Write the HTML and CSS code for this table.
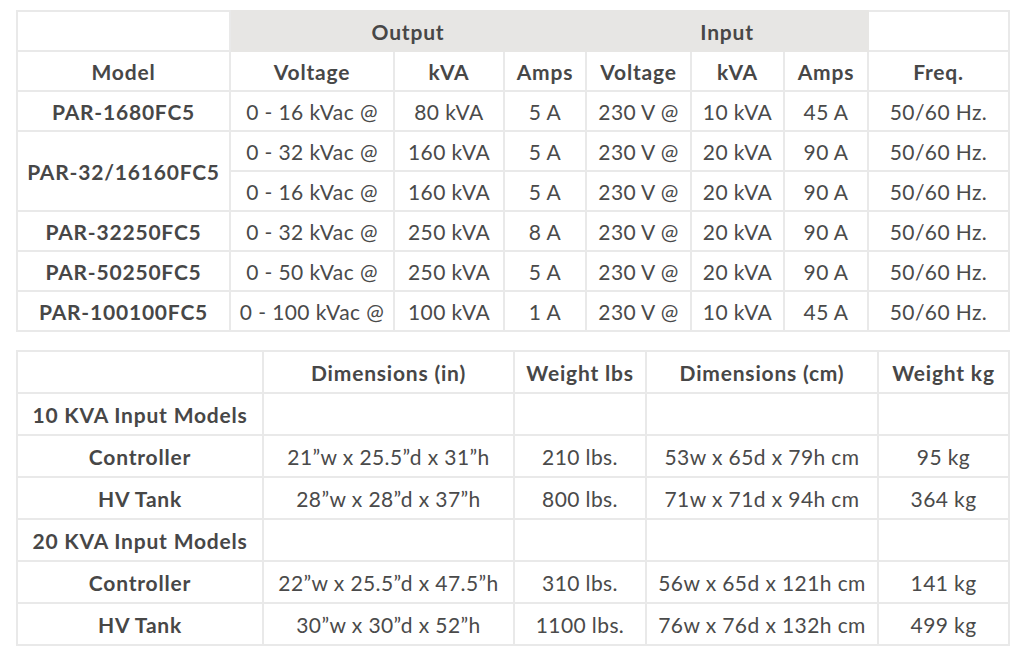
FILE: index.html
```html
<!DOCTYPE html>
<html>
<head>
<meta charset="utf-8">
<link rel="stylesheet" href="styles.css">
</head>
<body>
<div class="page">
<table class="spec spec-power">
  <colgroup>
    <col class="c-model"><col class="c-ovolt"><col class="c-okva"><col class="c-oamps"><col class="c-ivolt"><col class="c-ikva"><col class="c-iamps"><col class="c-freq">
  </colgroup>
  <tr class="group-row">
    <th class="blank"></th>
    <th class="group" colspan="3">Output</th>
    <th class="group" colspan="3">Input</th>
    <th class="blank"></th>
  </tr>
  <tr>
    <th>Model</th><th>Voltage</th><th>kVA</th><th>Amps</th><th>Voltage</th><th>kVA</th><th>Amps</th><th>Freq.</th>
  </tr>
  <tr>
    <th>PAR-1680FC5</th><td>0 - 16 kVac @</td><td>80 kVA</td><td>5 A</td><td>230 V @</td><td>10 kVA</td><td>45 A</td><td>50/60 Hz.</td>
  </tr>
  <tr>
    <th rowspan="2">PAR-32/16160FC5</th><td>0 - 32 kVac @</td><td>160 kVA</td><td>5 A</td><td>230 V @</td><td>20 kVA</td><td>90 A</td><td>50/60 Hz.</td>
  </tr>
  <tr>
    <td>0 - 16 kVac @</td><td>160 kVA</td><td>5 A</td><td>230 V @</td><td>20 kVA</td><td>90 A</td><td>50/60 Hz.</td>
  </tr>
  <tr>
    <th>PAR-32250FC5</th><td>0 - 32 kVac @</td><td>250 kVA</td><td>8 A</td><td>230 V @</td><td>20 kVA</td><td>90 A</td><td>50/60 Hz.</td>
  </tr>
  <tr>
    <th>PAR-50250FC5</th><td>0 - 50 kVac @</td><td>250 kVA</td><td>5 A</td><td>230 V @</td><td>20 kVA</td><td>90 A</td><td>50/60 Hz.</td>
  </tr>
  <tr>
    <th>PAR-100100FC5</th><td>0 - 100 kVac @</td><td>100 kVA</td><td>1 A</td><td>230 V @</td><td>10 kVA</td><td>45 A</td><td>50/60 Hz.</td>
  </tr>
</table>

<table class="spec spec-dims">
  <colgroup>
    <col class="d-name"><col class="d-in"><col class="d-lbs"><col class="d-cm"><col class="d-kg">
  </colgroup>
  <tr>
    <th></th><th>Dimensions (in)</th><th>Weight lbs</th><th>Dimensions (cm)</th><th>Weight kg</th>
  </tr>
  <tr>
    <th>10 KVA Input Models</th><td></td><td></td><td></td><td></td>
  </tr>
  <tr>
    <th>Controller</th><td>21”w x 25.5”d x 31”h</td><td>210 lbs.</td><td>53w x 65d x 79h cm</td><td>95 kg</td>
  </tr>
  <tr>
    <th>HV Tank</th><td>28”w x 28”d x 37”h</td><td>800 lbs.</td><td>71w x 71d x 94h cm</td><td>364 kg</td>
  </tr>
  <tr>
    <th>20 KVA Input Models</th><td></td><td></td><td></td><td></td>
  </tr>
  <tr>
    <th>Controller</th><td>22”w x 25.5”d x 47.5”h</td><td>310 lbs.</td><td>56w x 65d x 121h cm</td><td>141 kg</td>
  </tr>
  <tr>
    <th>HV Tank</th><td>30”w x 30”d x 52”h</td><td>1100 lbs.</td><td>76w x 76d x 132h cm</td><td>499 kg</td>
  </tr>
</table>
</div>
</body>
</html>
```

FILE: styles.css
```css
html, body {
  margin: 0;
  padding: 0;
  background: #ffffff;
}

.page {
  padding: 10px 16px;
  display: flex;
  flex-direction: column;
  gap: 18px;
}

.spec {
  width: 992px;
  border-collapse: collapse;
  table-layout: fixed;
  font-family: "Lato", "Open Sans", sans-serif;
  font-size: 21px;
  color: #4a4a4a;
  border: 2px solid #e9e9e9;
}

.spec th,
.spec td {
  border: 2px solid #e9e9e9;
  text-align: center;
  vertical-align: middle;
  padding: 0;
  white-space: nowrap;
}

.spec th {
  font-weight: 700;
  color: #474747;
  letter-spacing: 0.8px;
}

.spec td {
  font-weight: 400;
  letter-spacing: 0.4px;
}

.spec-power tr {
  height: 40px;
}

.spec-dims tr {
  height: 42px;
}

.spec .group {
  background: #e7e6e4;
  border-color: #e7e6e4;
}

.spec .blank {
  background: #ffffff;
}

.c-model { width: 213px; }
.c-ovolt { width: 164px; }
.c-okva  { width: 110px; }
.c-oamps { width: 82px; }
.c-ivolt { width: 105px; }
.c-ikva  { width: 93px; }
.c-iamps { width: 84px; }
.c-freq  { width: 141px; }

.d-name { width: 246px; }
.d-in   { width: 251px; }
.d-lbs  { width: 132px; }
.d-cm   { width: 232px; }
.d-kg   { width: 131px; }
```
